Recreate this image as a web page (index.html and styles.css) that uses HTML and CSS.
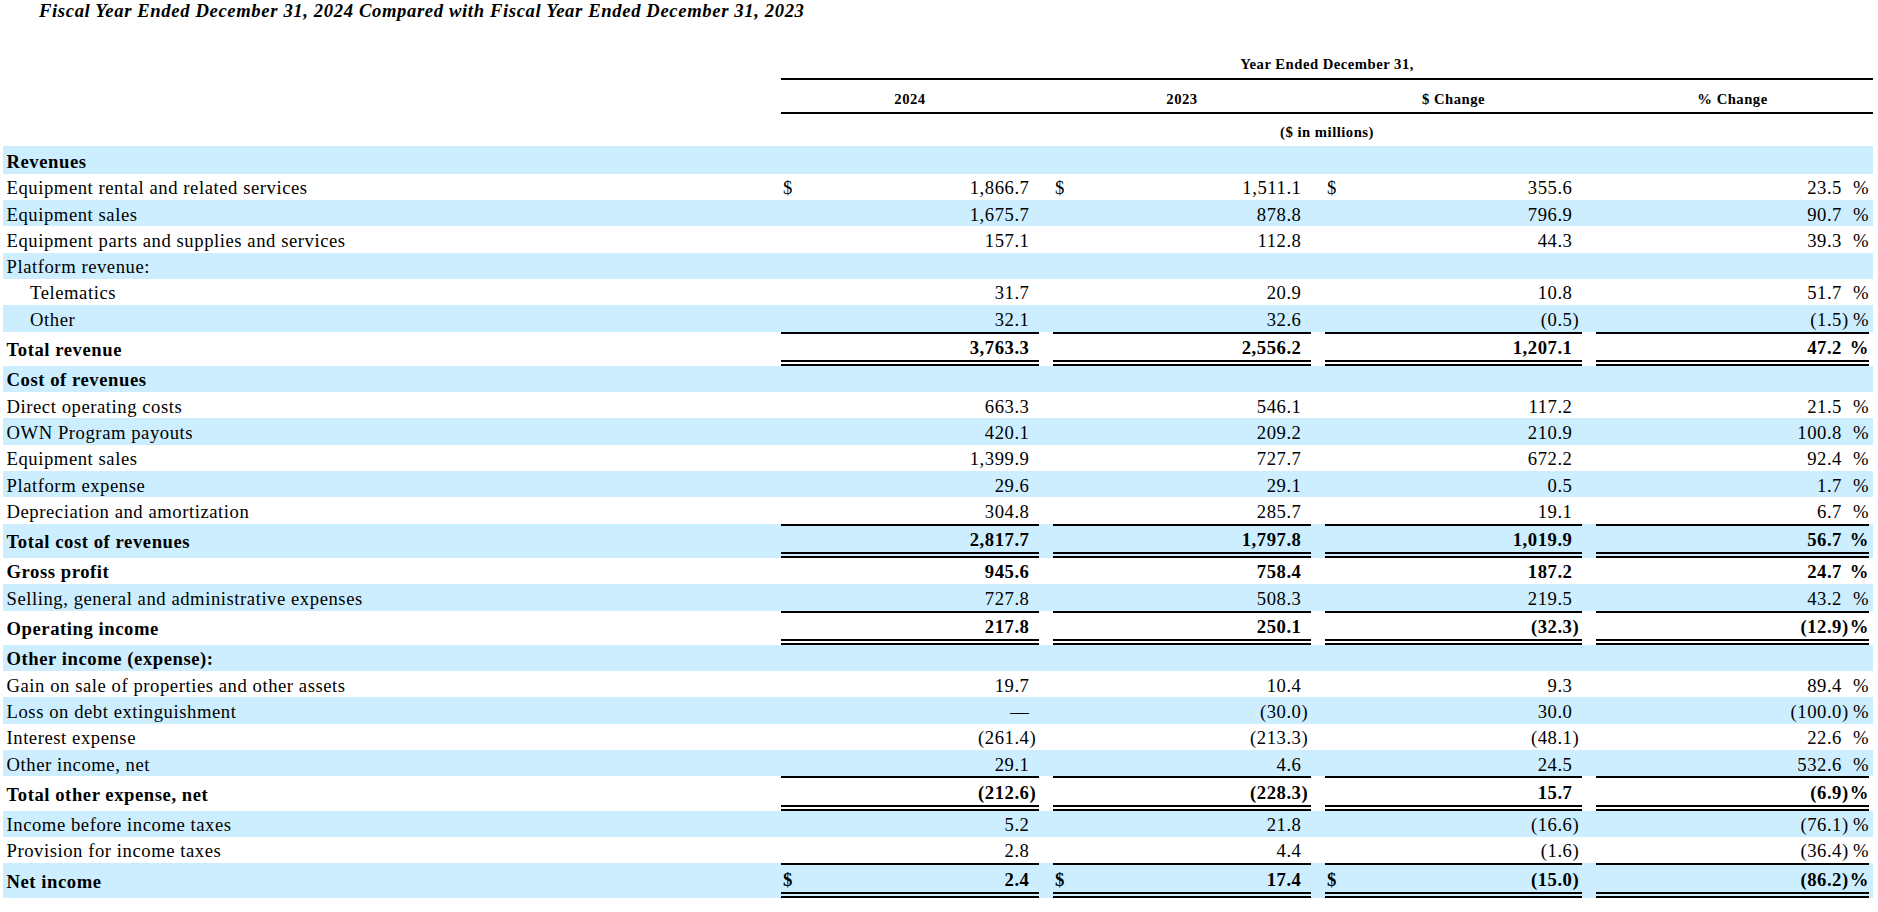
FILE: index.html
```html
<!DOCTYPE html>
<html>
<head>
<meta charset="utf-8">
<title>Fiscal Year Comparison</title>
<link rel="stylesheet" href="styles.css">
</head>
<body>
<p class="title">Fiscal Year Ended December 31, 2024 Compared with Fiscal Year Ended December 31, 2023</p>
<table class="fin">
<colgroup>
<col class="c-label"><col class="c-num"><col class="c-gap"><col class="c-num"><col class="c-gap"><col class="c-num2"><col class="c-gap"><col class="c-pct"><col class="c-trail">
</colgroup>
<thead>
<tr class="h1"><td></td><th colspan="8">Year Ended December 31,</th></tr>
<tr class="h2"><td></td><th>2024</th><th></th><th>2023</th><th></th><th>$ Change</th><th></th><th>% Change</th><th></th></tr>
<tr class="h3"><td></td><th colspan="8">($ in millions)</th></tr>
</thead>
<tbody>
<tr class="b bold first"><td class="l">Revenues</td><td class="n"></td><td class="g"></td><td class="n"></td><td class="g"></td><td class="n"></td><td class="g"></td><td class="p"></td><td class="t"></td></tr>
<tr><td class="l">Equipment rental and related services</td><td class="n"><span class="cur">$</span>1,866.7</td><td class="g"></td><td class="n"><span class="cur">$</span>1,511.1</td><td class="g"></td><td class="n"><span class="cur">$</span>355.6</td><td class="g"></td><td class="p">23.5<span class="pc">%</span></td><td class="t"></td></tr>
<tr class="b"><td class="l">Equipment sales</td><td class="n">1,675.7</td><td class="g"></td><td class="n">878.8</td><td class="g"></td><td class="n">796.9</td><td class="g"></td><td class="p">90.7<span class="pc">%</span></td><td class="t"></td></tr>
<tr><td class="l">Equipment parts and supplies and services</td><td class="n">157.1</td><td class="g"></td><td class="n">112.8</td><td class="g"></td><td class="n">44.3</td><td class="g"></td><td class="p">39.3<span class="pc">%</span></td><td class="t"></td></tr>
<tr class="b"><td class="l">Platform revenue:</td><td class="n"></td><td class="g"></td><td class="n"></td><td class="g"></td><td class="n"></td><td class="g"></td><td class="p"></td><td class="t"></td></tr>
<tr><td class="l ind">Telematics</td><td class="n">31.7</td><td class="g"></td><td class="n">20.9</td><td class="g"></td><td class="n">10.8</td><td class="g"></td><td class="p">51.7<span class="pc">%</span></td><td class="t"></td></tr>
<tr class="b"><td class="l ind">Other</td><td class="n">32.1</td><td class="g"></td><td class="n">32.6</td><td class="g"></td><td class="n">(0.5<span class="rp">)</span></td><td class="g"></td><td class="p">(1.5<span class="rp">)</span><span class="pc">%</span></td><td class="t"></td></tr>
<tr class="bold tot"><td class="l">Total revenue</td><td class="n">3,763.3</td><td class="g"></td><td class="n">2,556.2</td><td class="g"></td><td class="n">1,207.1</td><td class="g"></td><td class="p">47.2<span class="pc">%</span></td><td class="t"></td></tr>
<tr class="b bold"><td class="l">Cost of revenues</td><td class="n"></td><td class="g"></td><td class="n"></td><td class="g"></td><td class="n"></td><td class="g"></td><td class="p"></td><td class="t"></td></tr>
<tr><td class="l">Direct operating costs</td><td class="n">663.3</td><td class="g"></td><td class="n">546.1</td><td class="g"></td><td class="n">117.2</td><td class="g"></td><td class="p">21.5<span class="pc">%</span></td><td class="t"></td></tr>
<tr class="b"><td class="l">OWN Program payouts</td><td class="n">420.1</td><td class="g"></td><td class="n">209.2</td><td class="g"></td><td class="n">210.9</td><td class="g"></td><td class="p">100.8<span class="pc">%</span></td><td class="t"></td></tr>
<tr><td class="l">Equipment sales</td><td class="n">1,399.9</td><td class="g"></td><td class="n">727.7</td><td class="g"></td><td class="n">672.2</td><td class="g"></td><td class="p">92.4<span class="pc">%</span></td><td class="t"></td></tr>
<tr class="b"><td class="l">Platform expense</td><td class="n">29.6</td><td class="g"></td><td class="n">29.1</td><td class="g"></td><td class="n">0.5</td><td class="g"></td><td class="p">1.7<span class="pc">%</span></td><td class="t"></td></tr>
<tr><td class="l">Depreciation and amortization</td><td class="n">304.8</td><td class="g"></td><td class="n">285.7</td><td class="g"></td><td class="n">19.1</td><td class="g"></td><td class="p">6.7<span class="pc">%</span></td><td class="t"></td></tr>
<tr class="b bold tot"><td class="l">Total cost of revenues</td><td class="n">2,817.7</td><td class="g"></td><td class="n">1,797.8</td><td class="g"></td><td class="n">1,019.9</td><td class="g"></td><td class="p">56.7<span class="pc">%</span></td><td class="t"></td></tr>
<tr class="bold"><td class="l">Gross profit</td><td class="n">945.6</td><td class="g"></td><td class="n">758.4</td><td class="g"></td><td class="n">187.2</td><td class="g"></td><td class="p">24.7<span class="pc">%</span></td><td class="t"></td></tr>
<tr class="b"><td class="l">Selling, general and administrative expenses</td><td class="n">727.8</td><td class="g"></td><td class="n">508.3</td><td class="g"></td><td class="n">219.5</td><td class="g"></td><td class="p">43.2<span class="pc">%</span></td><td class="t"></td></tr>
<tr class="bold tot"><td class="l">Operating income</td><td class="n">217.8</td><td class="g"></td><td class="n">250.1</td><td class="g"></td><td class="n">(32.3<span class="rp">)</span></td><td class="g"></td><td class="p">(12.9<span class="rp">)</span><span class="pc">%</span></td><td class="t"></td></tr>
<tr class="b bold"><td class="l">Other income (expense):</td><td class="n"></td><td class="g"></td><td class="n"></td><td class="g"></td><td class="n"></td><td class="g"></td><td class="p"></td><td class="t"></td></tr>
<tr><td class="l">Gain on sale of properties and other assets</td><td class="n">19.7</td><td class="g"></td><td class="n">10.4</td><td class="g"></td><td class="n">9.3</td><td class="g"></td><td class="p">89.4<span class="pc">%</span></td><td class="t"></td></tr>
<tr class="b"><td class="l">Loss on debt extinguishment</td><td class="n">—</td><td class="g"></td><td class="n">(30.0<span class="rp">)</span></td><td class="g"></td><td class="n">30.0</td><td class="g"></td><td class="p">(100.0<span class="rp">)</span><span class="pc">%</span></td><td class="t"></td></tr>
<tr><td class="l">Interest expense</td><td class="n">(261.4<span class="rp">)</span></td><td class="g"></td><td class="n">(213.3<span class="rp">)</span></td><td class="g"></td><td class="n">(48.1<span class="rp">)</span></td><td class="g"></td><td class="p">22.6<span class="pc">%</span></td><td class="t"></td></tr>
<tr class="b"><td class="l">Other income, net</td><td class="n">29.1</td><td class="g"></td><td class="n">4.6</td><td class="g"></td><td class="n">24.5</td><td class="g"></td><td class="p">532.6<span class="pc">%</span></td><td class="t"></td></tr>
<tr class="bold tot"><td class="l">Total other expense, net</td><td class="n">(212.6<span class="rp">)</span></td><td class="g"></td><td class="n">(228.3<span class="rp">)</span></td><td class="g"></td><td class="n">15.7</td><td class="g"></td><td class="p">(6.9<span class="rp">)</span><span class="pc">%</span></td><td class="t"></td></tr>
<tr class="b"><td class="l">Income before income taxes</td><td class="n">5.2</td><td class="g"></td><td class="n">21.8</td><td class="g"></td><td class="n">(16.6<span class="rp">)</span></td><td class="g"></td><td class="p">(76.1<span class="rp">)</span><span class="pc">%</span></td><td class="t"></td></tr>
<tr><td class="l">Provision for income taxes</td><td class="n">2.8</td><td class="g"></td><td class="n">4.4</td><td class="g"></td><td class="n">(1.6<span class="rp">)</span></td><td class="g"></td><td class="p">(36.4<span class="rp">)</span><span class="pc">%</span></td><td class="t"></td></tr>
<tr class="b bold tot"><td class="l">Net income</td><td class="n"><span class="cur">$</span>2.4</td><td class="g"></td><td class="n"><span class="cur">$</span>17.4</td><td class="g"></td><td class="n"><span class="cur">$</span>(15.0<span class="rp">)</span></td><td class="g"></td><td class="p">(86.2<span class="rp">)</span><span class="pc">%</span></td><td class="t"></td></tr>
</tbody>
</table>
</body>
</html>
```

FILE: styles.css
```css
html, body {
  margin: 0;
  padding: 0;
  background: #ffffff;
}

body {
  font-family: "Liberation Serif", "Times New Roman", serif;
  font-size: 18.67px;
  letter-spacing: 0.55px;
  color: #000000;
}

.title {
  margin: 0 0 33.35px 0;
  padding-left: 39px;
  font-weight: bold;
  font-style: italic;
  line-height: 21.45px;
  letter-spacing: 0.62px;
}

.fin {
  margin-left: 3px;
  width: 1870px;
  table-layout: fixed;
  border-collapse: separate;
  border-spacing: 0;
}

.c-label { width: 778px; }
.c-num { width: 258px; }
.c-num2 { width: 257px; }
.c-gap { width: 14px; }
.c-pct { width: 273px; }
.c-trail { width: 4px; }

.fin th {
  font-size: 14.67px;
  font-weight: bold;
  text-align: center;
  line-height: 16.85px;
  letter-spacing: 0.5px;
  padding: 0;
  white-space: nowrap;
}

.fin thead td {
  padding: 0;
}

.h1 th {
  padding-top: 1px;
  padding-bottom: 5px;
  border-bottom: 2px solid #000000;
}

.h2 th {
  padding-top: 11.4px;
  padding-bottom: 3.7px;
  border-bottom: 2px solid #000000;
}

.h3 th {
  padding-top: 10.9px;
  padding-bottom: 4.5px;
}

.fin tbody td {
  padding: 3.5px 0 1.35px 0;
  line-height: 21.45px;
  white-space: nowrap;
}

.fin tbody tr.first td {
  padding-top: 5.2px;
}

.fin tr.b td {
  background: #cceeff;
}

.fin tr.bold td {
  font-weight: bold;
}

.fin td.l {
  padding-left: 3.5px;
  text-align: left;
}

.fin td.l.ind {
  padding-left: 27px;
}

.fin td.n {
  text-align: right;
  padding-right: 9.5px;
  padding-left: 2px;
}

.cur {
  float: left;
}

.rp {
  margin-right: -6.77px;
}

.fin td.p {
  text-align: right;
  padding-right: 0;
}

.pc {
  display: inline-block;
  width: 27px;
  text-align: right;
}

.fin tr.tot td.n,
.fin tr.tot td.p {
  border-top: 2px solid #000000;
  border-bottom: 6px double #000000;
}
```
